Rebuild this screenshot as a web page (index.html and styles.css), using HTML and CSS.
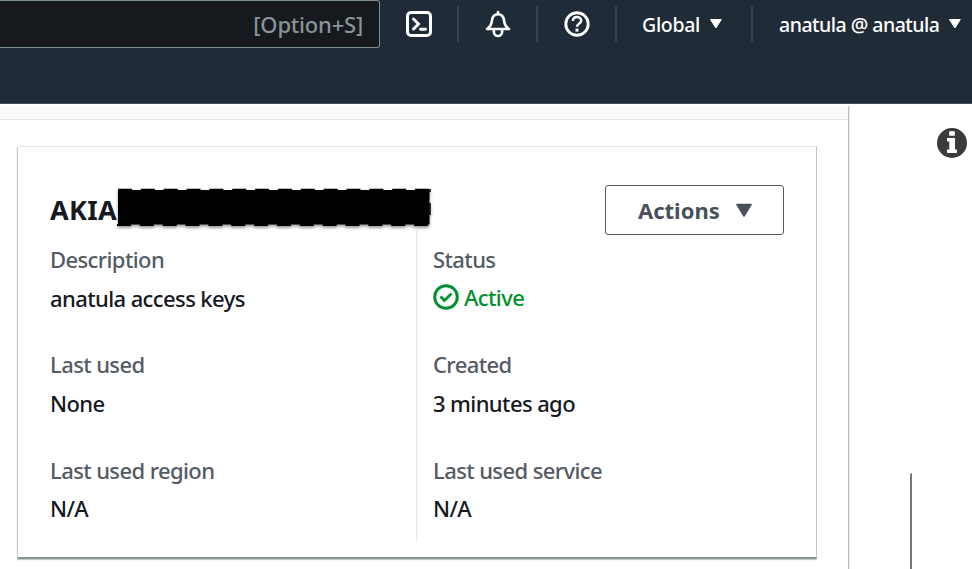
FILE: index.html
```html
<!DOCTYPE html>
<html lang="en">
<head>
<meta charset="utf-8">
<title>Access keys</title>
<link rel="stylesheet" href="styles.css">
</head>
<body>
<header class="topbar">
  <div class="search"><span class="hint">[Option+S]</span></div>
  <nav class="tools">
    <div class="tool tool-shell"><svg width="28" height="28" viewBox="0 0 28 28"><rect x="2.500" y="2.500" width="23" height="23" rx="3.500" fill="none" stroke="#fff" stroke-width="3"/><path d="M8.500 9l5 5-5 5M15.500 19.200h5" fill="none" stroke="#fff" stroke-width="2.900" stroke-linecap="round"/></svg></div>
    <div class="tool tool-bell"><svg width="28" height="28" viewBox="0 0 28 28"><path d="M3 19c4-3 4.500-5 5-9 .6-4 2.800-5.800 6-5.800s5.400 1.800 6 5.800c.5 4 1 6 5 9z" fill="none" stroke="#fff" stroke-width="2.600" stroke-linejoin="round"/><path d="M14 4V2M9.900 19.500v2.500a4.100 4 0 0 0 8.200 0v-2.500" fill="none" stroke="#fff" stroke-width="2.600" stroke-linecap="round"/></svg></div>
    <div class="tool tool-help"><svg width="28" height="28" viewBox="0 0 28 28"><circle cx="14" cy="14" r="11.200" fill="none" stroke="#fff" stroke-width="2.900"/><path d="M9.900 11c0-5.400 8.300-5 8.300-.5 0 3.300-4.200 3.200-4.200 6.200" fill="none" stroke="#fff" stroke-width="2.500"/><path d="M12.500 18.600h3v3h-3z" fill="#fff"/></svg></div>
    <div class="tool tool-region"><span class="t-global">Global</span><svg width="14" height="12" viewBox="0 0 14 12"><path d="M1.500 1.500h10.800L6.900 10z" fill="#fff" stroke="#fff" stroke-linejoin="round"/></svg></div>
    <div class="tool tool-user"><span class="t-user">anatula @ anatula</span><svg width="14" height="12" viewBox="0 0 14 12"><path d="M1.500 1.500h10.800L6.900 10z" fill="#fff" stroke="#fff" stroke-linejoin="round"/></svg></div>
  </nav>
</header>
<div class="page">
  <main class="content">
    <div class="strip"></div>
    <section class="card">
      <div class="card-head">
        <h2>AKIA</h2>
        <svg class="mask" width="318" height="44" viewBox="0 0 318 44"><path d="M3 5H314.500V39.500H3z" fill="#000"/><path d="M3 5H315" stroke="#000" stroke-width="2.500" stroke-dasharray="14 8.850"/><path d="M2 40H314" stroke="#000" stroke-width="2" stroke-dasharray="14 8.850"/><path d="M315 4V7M315 18V30" stroke="#000" stroke-width="1.500"/></svg>
        <button class="actions"><span>Actions</span><svg width="18" height="16" viewBox="0 0 18 16"><path d="M2 2.500h14L9 14z" fill="#495059" stroke="#495059" stroke-width="1.500" stroke-linejoin="round"/></svg></button>
      </div>
      <div class="columns">
        <dl class="col">
          <div class="pair"><dt>Description</dt><dd>anatula access keys</dd></div>
          <div class="pair"><dt>Last used</dt><dd>None</dd></div>
          <div class="pair"><dt>Last used region</dt><dd>N/A</dd></div>
        </dl>
        <dl class="col col-right">
          <div class="pair"><dt>Status</dt><dd class="active"><svg width="26" height="26" viewBox="0 0 26 26"><circle cx="13" cy="13" r="11.300" fill="none" stroke="#00902f" stroke-width="3"/><path d="M7.500 12.500l4 4 7-7" fill="none" stroke="#00902f" stroke-width="2.800"/></svg><span>Active</span></dd></div>
          <div class="pair"><dt>Created</dt><dd>3 minutes ago</dd></div>
          <div class="pair"><dt>Last used service</dt><dd>N/A</dd></div>
        </dl>
      </div>
    </section>
  </main>
  <aside class="side">
    <svg class="info" width="30" height="30" viewBox="0 0 30 30"><circle cx="15" cy="15" r="15" fill="#3b3b3b"/><path d="M12.200 3.300h5.600v4.500h-5.600zM10 10h8v11.500h2V25H10v-3.500h2.300v-8H10z" fill="#fff"/></svg>
    <div class="edge"></div>
  </aside>
</div>
</body>
</html>
```

FILE: styles.css
```css
* { box-sizing: border-box; }
body { margin: 0; width: 972px; height: 569px; overflow: hidden; background: #fff; color: #16191f; font-family: "Noto Sans", sans-serif; font-size: 22px; }
svg { display: block; flex: none; }
.topbar { display: flex; align-items: flex-start; height: 104px; background: #1f2b37; border-bottom: 1px solid #45515c; }
.search { width: 380px; height: 48px; border: 1px solid #7b8d8d; border-left: 0; border-radius: 0 3px 3px 0; background: #16191d; display: flex; align-items: center; justify-content: flex-end; padding-right: 16px; }
.hint { color: #879596; font-size: 22px; font-weight: 500; white-space: nowrap; letter-spacing: -.2px; }
.tools { display: flex; padding-top: 6px; }
.tool { display: flex; align-items: center; height: 36px; color: #fff; font-size: 19.500px; font-weight: 500; white-space: nowrap; border-left: 2px solid #39424d; }
.tool-shell { width: 77px; padding-left: 23px; border-left-color: transparent; }
.tool-bell { width: 79px; padding-left: 25px; }
.tool-help { width: 79px; padding-left: 25px; }
.tool-region { width: 136px; padding-left: 25px; }
.tool-region svg { margin-left: 9px; }
.tool-user { width: 220px; padding-left: 26px; }
.tool-user svg { margin-left: 9px; }
.t-global { letter-spacing: -.3px; }
.t-user { letter-spacing: -.5px; }
.page { display: flex; height: 465px; padding-top: 2px; }
.content { width: 850px; border-right: 1px solid #e9e9e9; box-shadow: inset -1px 0 #bcbcbc; }
.strip { height: 14px; margin-right: 1px; background: #f9f9f9; border-bottom: 1px solid #e6e8e8; }
.card { margin: 26px 0 0 18px; width: 799px; height: 413px; padding: 38px 32px 0 32px; border: solid; border-width: 1px 1px 2px 0; border-color: #e6eaea #c0c9c9 #879596; box-shadow: -1px 1px 1px #c5caca; background: #fff; }
.card-head { display: flex; height: 50px; }
h2 { margin: 0; width: 66px; font-size: 27px; line-height: 49px; letter-spacing: .3px; white-space: nowrap; }
.mask { z-index: 1; margin-left: -1px; filter: drop-shadow(0 2px 1.5px #0006); }
.actions { margin-left: auto; width: 179px; height: 50px; border: 1px solid #545b64; border-radius: 3px; background: #fff; color: #495059; font: 700 22px "Noto Sans", sans-serif; display: flex; align-items: center; justify-content: flex-start; padding: 0 0 0 32px; }
.actions svg { margin-left: 15px; }
.columns { display: flex; margin-top: -5px; }
.col { margin: 0; width: 366px; height: 312px; padding-top: 13px; }
.col-right { border-left: 1px solid #e1e6e6; padding-left: 16px; }
.pair { height: 105.300px; }
dt, dd { margin: 0; line-height: 32px; white-space: nowrap; letter-spacing: -.6px; font-weight: 500; }
dt { color: #545b64; margin-bottom: 6.500px; }
.active { display: flex; align-items: center; color: #00902f; }
.active svg { margin-top: -1px; }
.active span { margin: -1px 0 0 5px; }
.side { width: 122px; }
.info { margin: 22px 0 0 87px; }
.edge { width: 2px; height: 97px; margin: 315px 0 0 60px; background: #777; border-top-left-radius: 2px; }
```
